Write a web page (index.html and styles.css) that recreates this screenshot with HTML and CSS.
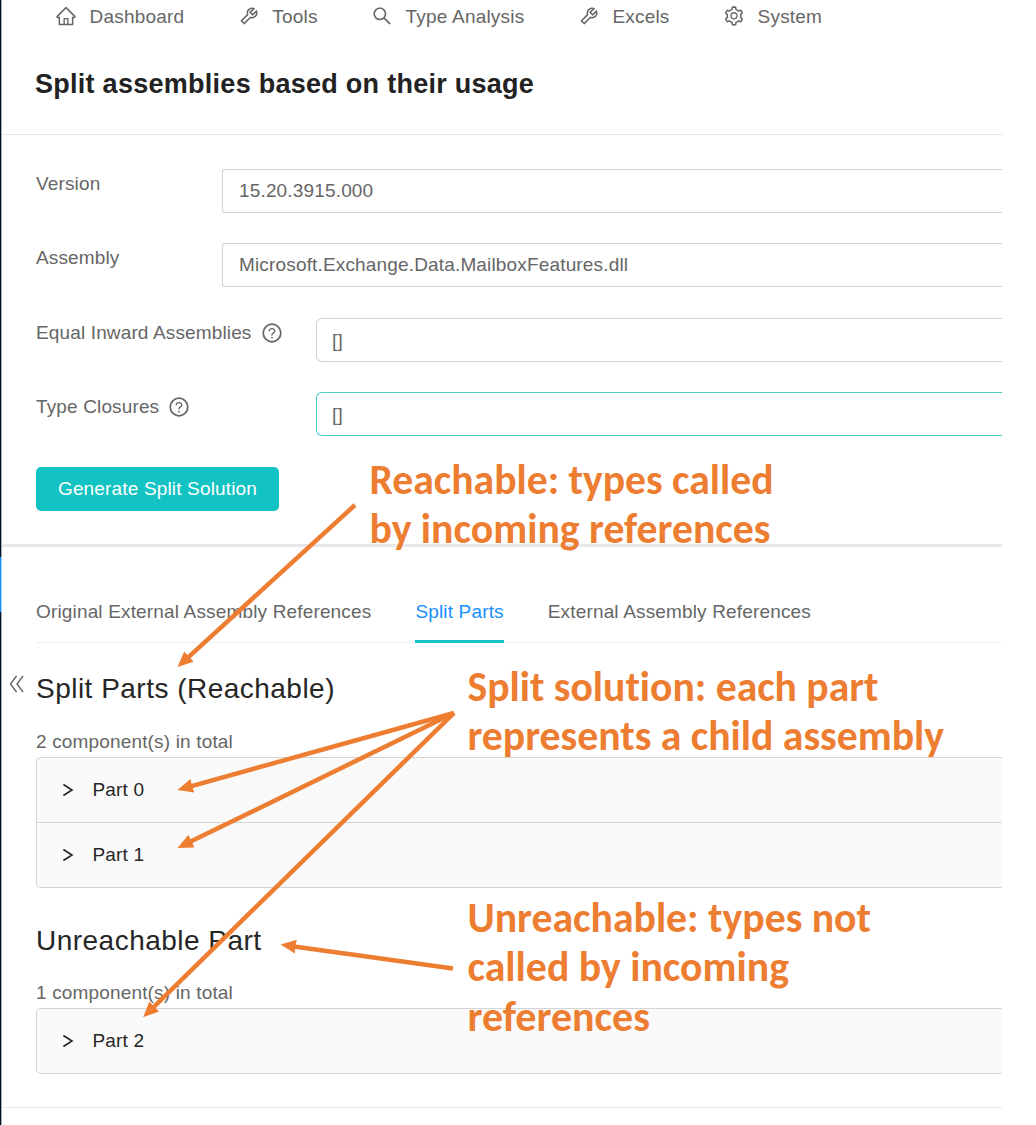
FILE: index.html
```html
<!DOCTYPE html>
<html lang="en">
<head>
<meta charset="utf-8">
<title>Split assemblies</title>
<link rel="stylesheet" href="styles.css">
</head>
<body>
<svg class="defs" aria-hidden="true">
  <symbol id="home" viewBox="0 0 1024 1024"><path d="M946.5 505L560.1 118.8l-25.9-25.9a31.5 31.5 0 0 0-44.4 0L77.5 505a63.9 63.9 0 0 0-18.8 46c.4 35.2 29.7 63.3 64.9 63.3h42.5V940h691.8V614.3h43.4c17.1 0 33.2-6.7 45.3-18.8a63.6 63.6 0 0 0 18.7-45.3c0-17-6.7-33.1-18.8-45.2zM568 868H456V664h112v204zm217.9-325.7V868H632V640c0-22.1-17.9-40-40-40H432c-22.1 0-40 17.9-40 40v228H238.1V542.3h-96l370-369.7 23.1 23.1L882 542.3h-96.1z"/></symbol>
  <symbol id="tool" viewBox="0 0 1024 1024"><path d="M876.6 239.5c-.5-.9-1.2-1.8-2-2.5-5-5-13.1-5-18.1 0L684.2 409.3l-67.9-67.9L788.7 169c.8-.8 1.4-1.6 2-2.5 3.6-6.1 1.6-13.9-4.5-17.5-98.2-58-226.8-44.7-311.3 39.7-67 67-89.2 162-66.5 247.4l-293 293c-3 3-2.8 7.9.3 11l169.7 169.7c3.1 3.1 8.1 3.3 11 .3l292.9-292.9c85.5 22.8 180.5.7 247.6-66.4 84.4-84.5 97.7-213.1 39.7-311.3zM786 499.8c-58.1 58.1-145.3 69.3-214.6 33.6l-8.8 8.8-.1-.1-274 274.1-79.2-79.2 230.1-230.1s0 .1.1.1l52.8-52.8c-35.7-69.3-24.5-156.5 33.6-214.6a184.2 184.2 0 0 1 144-53.5L537 318.9a32.05 32.05 0 0 0 0 45.3l124.5 124.5a32.05 32.05 0 0 0 45.3 0l132.8-132.8c3.7 51.8-14.4 104.8-53.6 143.9z"/></symbol>
  <symbol id="search" viewBox="0 0 1024 1024"><path d="M909.6 854.5L649.9 594.8C690.2 542.7 712 479 712 412c0-80.2-31.3-155.4-87.9-212.1-56.6-56.7-132-87.9-212.1-87.9s-155.5 31.3-212.1 87.9C143.2 256.5 112 331.8 112 412c0 80.1 31.3 155.5 87.9 212.1C256.5 680.8 331.8 712 412 712c67 0 130.6-21.8 182.7-62l259.7 259.6a8.2 8.2 0 0 0 11.6 0l43.6-43.5a8.2 8.2 0 0 0 0-11.6zM570.4 570.4C528 612.7 471.8 636 412 636s-116-23.3-158.4-65.6C211.3 528 188 471.8 188 412s23.3-116.1 65.6-158.4C296 211.3 352.2 188 412 188s116.1 23.2 158.4 65.6S636 352.2 636 412s-23.3 116.1-65.6 158.4z"/></symbol>
  <symbol id="setting" viewBox="0 0 1024 1024"><path d="M924.8 625.7l-65.5-56c3.1-19 4.7-38.4 4.7-57.8s-1.6-38.8-4.7-57.8l65.5-56a32.03 32.03 0 0 0 9.3-35.2l-.9-2.6a443.74 443.74 0 0 0-79.7-137.9l-1.8-2.1a32.12 32.12 0 0 0-35.1-9.5l-81.3 28.9c-30-24.6-63.5-44-99.7-57.6l-15.7-85a32.05 32.05 0 0 0-25.8-25.7l-2.7-.5c-52.1-9.4-106.9-9.4-159 0l-2.7.5a32.05 32.05 0 0 0-25.8 25.7l-15.8 85.4a351.86 351.86 0 0 0-99 57.4l-81.9-29.1a32 32 0 0 0-35.1 9.5l-1.8 2.1a446.02 446.02 0 0 0-79.7 137.9l-.9 2.6c-4.5 12.5-.8 26.5 9.3 35.2l66.3 56.6c-3.1 18.8-4.6 38-4.6 57.1 0 19.2 1.5 38.4 4.6 57.1L99 625.5a32.03 32.03 0 0 0-9.3 35.2l.9 2.6c18.1 50.4 44.9 96.9 79.7 137.9l1.8 2.1a32.12 32.12 0 0 0 35.1 9.5l81.9-29.1c29.8 24.5 63.1 43.9 99 57.4l15.8 85.4a32.05 32.05 0 0 0 25.8 25.7l2.7.5a449.4 449.4 0 0 0 159 0l2.7-.5a32.05 32.05 0 0 0 25.8-25.7l15.7-85a350 350 0 0 0 99.7-57.6l81.3 28.9a32 32 0 0 0 35.1-9.5l1.8-2.1c34.8-41.1 61.6-87.5 79.7-137.9l.9-2.6c4.5-12.3.8-26.3-9.3-35zM788.3 465.9c2.5 15.1 3.8 30.6 3.8 46.1s-1.3 31-3.8 46.1l-6.6 40.1 74.7 63.9a370.03 370.03 0 0 1-42.6 73.6L721 702.8l-31.4 25.8c-23.9 19.6-50.5 35-79.3 45.8l-38.1 14.3-17.9 97a377.5 377.5 0 0 1-85 0l-17.9-97.2-37.8-14.5c-28.5-10.8-55-26.2-78.7-45.7l-31.4-25.9-93.4 33.2c-17-22.9-31.2-47.6-42.6-73.6l75.5-64.5-6.5-40c-2.4-14.9-3.7-30.3-3.7-45.5 0-15.3 1.2-30.6 3.7-45.5l6.5-40-75.5-64.5c11.3-26.1 25.6-50.7 42.6-73.6l93.4 33.2 31.4-25.9c23.7-19.5 50.2-34.9 78.7-45.7l37.9-14.3 17.9-97.2c28.1-3.2 56.8-3.2 85 0l17.9 97 38.1 14.3c28.7 10.8 55.4 26.2 79.3 45.8l31.4 25.8 92.8-32.9c17 22.9 31.2 47.6 42.6 73.6L781.8 426l6.5 39.9zM512 326c-97.2 0-176 78.8-176 176s78.8 176 176 176 176-78.8 176-176-78.8-176-176-176zm79.2 255.2A111.6 111.6 0 0 1 512 614c-29.9 0-58-11.7-79.2-32.8A111.6 111.6 0 0 1 400 502c0-29.9 11.7-58 32.8-79.2C454 401.6 482.1 390 512 390c29.9 0 58 11.6 79.2 32.8A111.6 111.6 0 0 1 624 502c0 29.9-11.7 58-32.8 79.2z"/></symbol>
  <symbol id="help" viewBox="0 0 1024 1024"><circle cx="512" cy="512" r="410" fill="none" stroke="currentColor" stroke-width="80"/><path d="M623.6 316.7C593.6 290.4 554 276 512 276s-81.6 14.5-111.6 40.7C369.2 344 352 380.7 352 420v7.6c0 4.4 3.6 8 8 8h48c4.4 0 8-3.6 8-8V420c0-44.1 43.1-80 96-80s96 35.9 96 80c0 31.1-22 59.6-56.1 72.7-21.2 8.1-39.2 22.3-52.1 40.9-13.1 19-19.9 41.8-19.9 64.9V620c0 4.400 3.600 8 8 8h48c4.400 0 8-3.600 8-8v-22.700a48.300 48.300 0 0 1 30.900-44.800c59-22.700 97.100-74.700 97.100-132.500.1-39.300-17.100-76-48.300-103.300zM472 732a40 40 0 1 0 80 0 40 40 0 1 0-80 0z"/></symbol>
  <symbol id="chevron" viewBox="0 0 12 16"><path d="M1.400 2.500 10 8l-8.600 5.500" fill="none" stroke="currentColor" stroke-width="1.600"/></symbol>
</svg>
<div class="app">
  <div class="rail"><div class="rail-active"></div></div>
  <main class="page">
    <nav class="nav">
      <a class="nav-item"><svg class="icon"><use href="#home"/></svg>Dashboard</a>
      <a class="nav-item"><svg class="icon"><use href="#tool"/></svg>Tools</a>
      <a class="nav-item"><svg class="icon"><use href="#search"/></svg>Type Analysis</a>
      <a class="nav-item"><svg class="icon"><use href="#tool"/></svg>Excels</a>
      <a class="nav-item"><svg class="icon"><use href="#setting"/></svg>System</a>
    </nav>
    <header class="title-bar"><h1 class="title">Split assemblies based on their usage</h1></header>
    <form class="form">
      <div class="row"><label class="label">Version</label><div class="input">15.20.3915.000</div></div>
      <div class="row"><label class="label">Assembly</label><div class="input">Microsoft.Exchange.Data.MailboxFeatures.dll</div></div>
      <div class="row row-json"><label class="label">Equal Inward Assemblies<svg class="icon"><use href="#help"/></svg></label><div class="input">[]</div></div>
      <div class="row row-json"><label class="label">Type Closures<svg class="icon"><use href="#help"/></svg></label><div class="input focused">[]</div></div>
      <button type="button" class="button">Generate Split Solution</button>
    </form>
    <section class="result">
      <div class="tabs">
        <div class="tab">Original External Assembly References</div>
        <div class="tab active">Split Parts</div>
        <div class="tab">External Assembly References</div>
      </div>
      <div class="group">
        <svg class="collapse-mark" viewBox="0 0 15 18"><path d="M7.500 1 1.500 9l6 8M14 1 8 9l6 8" fill="none" stroke="#666" stroke-width="1.400"/></svg>
        <h2 class="heading">Split Parts (Reachable)</h2>
        <p class="count">2 component(s) in total</p>
        <div class="panel">
          <div class="part"><svg class="chev"><use href="#chevron"/></svg>Part 0</div>
          <div class="part"><svg class="chev"><use href="#chevron"/></svg>Part 1</div>
        </div>
      </div>
      <div class="group">
        <h2 class="heading">Unreachable Part</h2>
        <p class="count">1 component(s) in total</p>
        <div class="panel">
          <div class="part"><svg class="chev"><use href="#chevron"/></svg>Part 2</div>
        </div>
      </div>
    </section>
    <div class="page-end"></div>
  </main>
  <svg class="notes" viewBox="0 0 1036 1125">
    <defs>
      <marker id="head" markerUnits="userSpaceOnUse" markerWidth="16" markerHeight="14" refX="5.500" refY="7" orient="auto"><path d="M0 0 15.500 7 0 14z" fill="#ed7d31"/></marker>
    </defs>
    <g class="arrows">
      <path d="M355 505 184.900 660.300"/>
      <path d="M454 713 187.100 787.300"/>
      <path d="M454 713 186.500 843.600"/>
      <path d="M454 713 150.300 1010.300"/>
      <path d="M453 968.500 290.400 945.900"/>
    </g>
    <g class="note-text">
      <text x="369.500" y="493.500" textLength="404" lengthAdjust="spacingAndGlyphs">Reachable: types called</text>
      <text x="369.500" y="543" textLength="401" lengthAdjust="spacingAndGlyphs">by incoming references</text>
      <text x="467.500" y="700.500" textLength="411" lengthAdjust="spacingAndGlyphs">Split solution: each part</text>
      <text x="467.500" y="750" textLength="476.500" lengthAdjust="spacingAndGlyphs">represents a child assembly</text>
      <text x="467.500" y="931.500" textLength="403.500" lengthAdjust="spacingAndGlyphs">Unreachable: types not</text>
      <text x="467.500" y="981" textLength="321.500" lengthAdjust="spacingAndGlyphs">called by incoming</text>
      <text x="467.500" y="1031" textLength="182.500" lengthAdjust="spacingAndGlyphs">references</text>
    </g>
  </svg>
</div>
</body>
</html>
```
FILE: styles.css
```css
* { box-sizing: border-box; }
body { margin: 0; background: #fff; color: #666; font: 19px/26px "Liberation Sans", Arial, sans-serif; letter-spacing: .16px; }
.defs { display: none; }
.app { position: relative; display: flex; width: 1036px; height: 1125px; overflow: hidden; }
.rail { flex: none; width: 2px; padding-top: 557px; background: linear-gradient(90deg, #001024 1px, #a9adb5 1px); }
.rail-active { width: 2px; height: 55px; background: linear-gradient(90deg, #1890ff 1px, #a3d3ff 1px); }
.page { width: 1000px; display: flex; flex-direction: column; }
.icon { width: 22px; height: 22px; fill: currentColor; flex: none; }

.nav { display: flex; gap: 53.500px; height: 34px; padding-left: 53px; align-items: center; }
.nav-item { display: flex; align-items: center; gap: 12.500px; letter-spacing: .2px; white-space: nowrap; }
.nav-item .icon { position: relative; top: -1px; }

.title-bar { height: 101px; padding: 33px 0 0 33px; border-bottom: 1px solid #e6e6e6; }
.title { margin: 0; font-size: 27px; line-height: 34px; letter-spacing: .27px; color: #222; }

.form { display: flex; flex-direction: column; gap: 30.500px; padding: 33.500px 0 0 34px; height: 412px; border-bottom: 3px solid #e8e8e8; }
.row { display: flex; height: 44px; flex: none; }
.label { display: flex; align-items: flex-start; width: 186px; padding-top: 2px; letter-spacing: .14px; }
.label .icon { margin: 2px 0 0 9px; }
.row-json .label { width: 280px; }
.input { flex: 1; display: flex; align-items: center; border: 1px solid #d4d4d4; border-right: 0; border-radius: 3px 0 0 3px; padding-left: 16px; }
.row-json .input { border-radius: 6px 0 0 6px; padding: 2px 0 0 15px; }
.row-json .focused { border-color: #45cdca; }
.button { width: 243px; height: 44px; flex: none; border: 0; border-radius: 5px; background: #13c2c2; color: #fff; font: inherit; letter-spacing: inherit; padding: 0; }

.result { height: 560px; padding-left: 34px; }
.tabs { display: flex; gap: 44px; height: 96px; padding-top: 52px; border-bottom: 1px solid #efefef; }
.tab { height: 44px; white-space: nowrap; }
.tab.active { color: #1890ff; border-bottom: 3px solid #13c2c2; }
.group { position: relative; }
.group + .group { margin-top: 7px; }
.group + .group .count { padding-top: 21px; }
.collapse-mark { position: absolute; left: -27px; top: 32px; width: 15px; height: 18px; }
.heading { margin: 0; padding-top: 28px; font-size: 28px; line-height: 36px; font-weight: 400; letter-spacing: .48px; color: #262626; }
.count { margin: 0; padding: 22px 0 2px; }
.panel { border: 1px solid #d4d4d4; border-right: 0; border-radius: 5px 0 0 5px; background: #fafafa; }
.part { display: flex; align-items: center; height: 64px; padding-left: 25px; color: #262626; }
.part + .part { border-top: 1px solid #d4d4d4; height: 65px; }
.chev { width: 12px; height: 16px; margin-right: 18.500px; }
.page-end { border-top: 1px solid #e8e8e8; }

.notes { position: absolute; inset: 0; width: 1036px; height: 1125px; pointer-events: none; }
.arrows path { fill: none; stroke: #ed7d31; stroke-width: 4.500px; marker-end: url(#head); }
.note-text { fill: #ed7d31; font: 700 42px Calibri, Carlito, Lato, sans-serif; font-variant-ligatures: none; letter-spacing: 0; }
```
